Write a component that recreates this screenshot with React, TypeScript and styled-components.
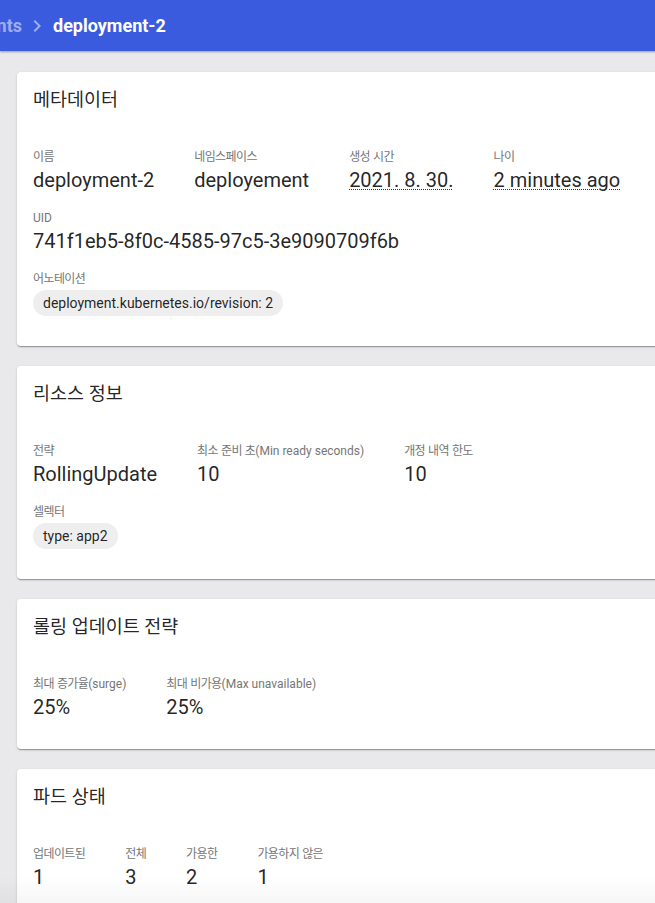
import React from 'react';
import styled, { createGlobalStyle } from 'styled-components';
import { MdChevronRight } from 'react-icons/md';

const GlobalStyle = createGlobalStyle`
  html, body {
    margin: 0;
    padding: 0;
    background: #e9e9eb;
    overflow: hidden;
  }
  body {
    font-family: Roboto, "Noto Sans CJK KR", sans-serif;
    color: rgba(0, 0, 0, 0.87);
  }
`;

const Page = styled.div`
  width: 760px;
  min-height: 903px;
`;

const TopBar = styled.header`
  position: relative;
  z-index: 1;
  height: 51px;
  display: flex;
  align-items: center;
  background: #3b5bdf;
  box-shadow: 0 1px 2px rgba(0, 0, 0, 0.35);
`;

const Crumbs = styled.nav`
  display: flex;
  align-items: center;
  font-size: 18px;
  font-weight: 700;
  color: #ffffff;
  white-space: nowrap;
`;

const PrevCrumb = styled.span`
  width: 22px;
  overflow: hidden;
  display: flex;
  justify-content: flex-end;
  color: rgba(255, 255, 255, 0.5);
`;

const Chevron = styled(MdChevronRight)`
  width: 24px;
  height: 24px;
  margin: 0 4px 0 3px;
  color: rgba(255, 255, 255, 0.5);
  flex: none;
`;

const CurrentCrumb = styled.span`
  color: #ffffff;
`;

const Main = styled.main`
  display: flex;
  flex-direction: column;
  gap: 20px;
  padding: 21px 0 20px 17px;
`;

const Card = styled.section`
  background: #ffffff;
  border-radius: 4px;
  box-shadow: 0 2px 1px -1px rgba(0, 0, 0, 0.2), 0 1px 1px 0 rgba(0, 0, 0, 0.14),
    0 1px 3px 0 rgba(0, 0, 0, 0.12);
`;

const CardTitle = styled.h2`
  margin: 0;
  padding: 16px 16px 0;
  height: 24px;
  font-size: 18.5px;
  line-height: 24px;
  font-weight: 400;
  color: rgba(0, 0, 0, 0.87);
`;

const CardBody = styled.div`
  display: flex;
  flex-direction: column;
  gap: 16px;
  padding: 37px 16px 28px;
`;

const FieldRow = styled.div`
  display: flex;
  column-gap: 40px;
`;

const Field = styled.div`
  display: flex;
  flex-direction: column;
`;

const Label = styled.div`
  height: 16px;
  font-size: 12px;
  line-height: 16px;
  color: #767676;
  white-space: nowrap;
`;

const Ko = styled.span`
  letter-spacing: -0.6px;
`;

const Value = styled.div<{ $dotted?: boolean }>`
  margin-top: 1px;
  height: 28px;
  font-size: 20px;
  line-height: 28px;
  color: rgba(0, 0, 0, 0.87);
  white-space: nowrap;
  text-decoration: ${(p) => (p.$dotted ? 'underline dotted #333' : 'none')};
  text-decoration-thickness: 1px;
  text-underline-offset: 2px;
`;

const ChipList = styled.div`
  display: flex;
  flex-wrap: wrap;
  gap: 8px;
  margin: 3px 0 2px;
`;

const Chip = styled.span`
  display: inline-flex;
  align-items: center;
  height: 26px;
  padding: 0 10px;
  border-radius: 13px;
  background: #eeeeee;
  font-size: 14px;
  color: rgba(0, 0, 0, 0.87);
  white-space: nowrap;
`;

const BottomFade = styled.div`
  position: fixed;
  left: 0;
  right: 0;
  bottom: 0;
  height: 26px;
  pointer-events: none;
  background: linear-gradient(to bottom, rgba(0, 0, 0, 0), rgba(0, 0, 0, 0.035));
`;

const HANGUL = /([\uAC00-\uD7A3\u3131-\u318E]+)/;

function koText(text: string) {
  return text
    .split(HANGUL)
    .map((part, i) => (i % 2 === 1 ? <Ko key={i}>{part}</Ko> : part));
}

type FieldData = { label: string; value: string; dotted?: boolean };
type CardData = {
  title: string;
  rows: FieldData[][];
  chips?: { label: string; items: string[] };
};

const cards: CardData[] = [
  {
    title: '메타데이터',
    rows: [
      [
        { label: '이름', value: 'deployment-2' },
        { label: '네임스페이스', value: 'deployement' },
        { label: '생성 시간', value: '2021. 8. 30.', dotted: true },
        { label: '나이', value: '2 minutes ago', dotted: true },
      ],
      [{ label: 'UID', value: '741f1eb5-8f0c-4585-97c5-3e9090709f6b' }],
    ],
    chips: { label: '어노테이션', items: ['deployment.kubernetes.io/revision: 2'] },
  },
  {
    title: '리소스 정보',
    rows: [
      [
        { label: '전략', value: 'RollingUpdate' },
        { label: '최소 준비 초(Min ready seconds)', value: '10' },
        { label: '개정 내역 한도', value: '10' },
      ],
    ],
    chips: { label: '셀렉터', items: ['type: app2'] },
  },
  {
    title: '롤링 업데이트 전략',
    rows: [
      [
        { label: '최대 증가율(surge)', value: '25%' },
        { label: '최대 비가용(Max unavailable)', value: '25%' },
      ],
    ],
  },
  {
    title: '파드 상태',
    rows: [
      [
        { label: '업데이트된', value: '1' },
        { label: '전체', value: '3' },
        { label: '가용한', value: '2' },
        { label: '가용하지 않은', value: '1' },
      ],
    ],
  },
];

export default function App() {
  return (
    <Page>
      <GlobalStyle />
      <TopBar>
        <Crumbs>
          <PrevCrumb>
            <span>Deployments</span>
          </PrevCrumb>
          <Chevron />
          <CurrentCrumb>deployment-2</CurrentCrumb>
        </Crumbs>
      </TopBar>
      <Main>
        {cards.map((card) => (
          <Card key={card.title}>
            <CardTitle>{card.title}</CardTitle>
            <CardBody>
              {card.rows.map((row, ri) => (
                <FieldRow key={ri}>
                  {row.map((f) => (
                    <Field key={f.label}>
                      <Label>{koText(f.label)}</Label>
                      <Value $dotted={f.dotted}>{f.value}</Value>
                    </Field>
                  ))}
                </FieldRow>
              ))}
              {card.chips && (
                <Field>
                  <Label>{koText(card.chips.label)}</Label>
                  <ChipList>
                    {card.chips.items.map((c) => (
                      <Chip key={c}>{c}</Chip>
                    ))}
                  </ChipList>
                </Field>
              )}
            </CardBody>
          </Card>
        ))}
      </Main>
      <BottomFade />
    </Page>
  );
}
